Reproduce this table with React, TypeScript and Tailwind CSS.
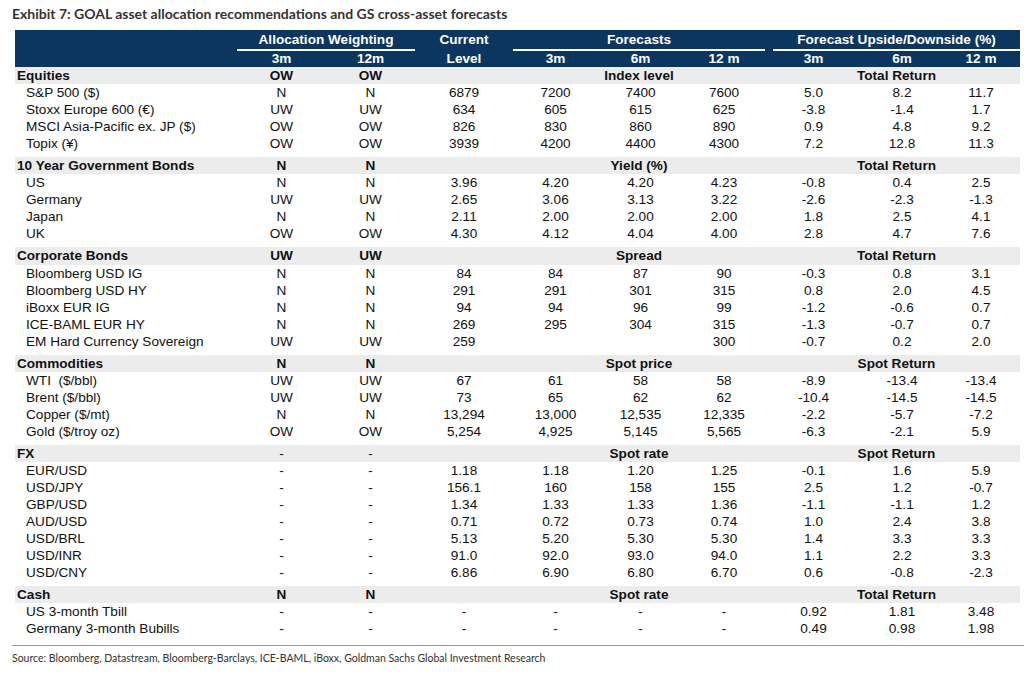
import React from 'react';

const COLS = 'grid grid-cols-[222px_89px_89px_98px_85px_85px_82px_97px_80px_78px]';

type Row = { label: string; v: string[] };
type Section = {
  name: string;
  a3: string;
  a12: string;
  fc: string;
  up: string;
  rows: Row[];
};

const r = (label: string, ...v: string[]): Row => ({ label, v });

const SECTIONS: Section[] = [
  {
    name: 'Equities',
    a3: 'OW',
    a12: 'OW',
    fc: 'Index level',
    up: 'Total Return',
    rows: [
      r('S&P 500 ($)', 'N', 'N', '6879', '7200', '7400', '7600', '5.0', '8.2', '11.7'),
      r('Stoxx Europe 600 (€)', 'UW', 'UW', '634', '605', '615', '625', '-3.8', '-1.4', '1.7'),
      r('MSCI Asia-Pacific ex. JP ($)', 'OW', 'OW', '826', '830', '860', '890', '0.9', '4.8', '9.2'),
      r('Topix (¥)', 'OW', 'OW', '3939', '4200', '4400', '4300', '7.2', '12.8', '11.3'),
    ],
  },
  {
    name: '10 Year Government Bonds',
    a3: 'N',
    a12: 'N',
    fc: 'Yield (%)',
    up: 'Total Return',
    rows: [
      r('US', 'N', 'N', '3.96', '4.20', '4.20', '4.23', '-0.8', '0.4', '2.5'),
      r('Germany', 'UW', 'UW', '2.65', '3.06', '3.13', '3.22', '-2.6', '-2.3', '-1.3'),
      r('Japan', 'N', 'N', '2.11', '2.00', '2.00', '2.00', '1.8', '2.5', '4.1'),
      r('UK', 'OW', 'OW', '4.30', '4.12', '4.04', '4.00', '2.8', '4.7', '7.6'),
    ],
  },
  {
    name: 'Corporate Bonds',
    a3: 'UW',
    a12: 'UW',
    fc: 'Spread',
    up: 'Total Return',
    rows: [
      r('Bloomberg USD IG', 'N', 'N', '84', '84', '87', '90', '-0.3', '0.8', '3.1'),
      r('Bloomberg USD HY', 'N', 'N', '291', '291', '301', '315', '0.8', '2.0', '4.5'),
      r('iBoxx EUR IG', 'N', 'N', '94', '94', '96', '99', '-1.2', '-0.6', '0.7'),
      r('ICE-BAML EUR HY', 'N', 'N', '269', '295', '304', '315', '-1.3', '-0.7', '0.7'),
      r('EM Hard Currency Sovereign', 'UW', 'UW', '259', '', '', '300', '-0.7', '0.2', '2.0'),
    ],
  },
  {
    name: 'Commodities',
    a3: 'N',
    a12: 'N',
    fc: 'Spot price',
    up: 'Spot Return',
    rows: [
      r('WTI  ($/bbl)', 'UW', 'UW', '67', '61', '58', '58', '-8.9', '-13.4', '-13.4'),
      r('Brent ($/bbl)', 'UW', 'UW', '73', '65', '62', '62', '-10.4', '-14.5', '-14.5'),
      r('Copper ($/mt)', 'N', 'N', '13,294', '13,000', '12,535', '12,335', '-2.2', '-5.7', '-7.2'),
      r('Gold ($/troy oz)', 'OW', 'OW', '5,254', '4,925', '5,145', '5,565', '-6.3', '-2.1', '5.9'),
    ],
  },
  {
    name: 'FX',
    a3: '-',
    a12: '-',
    fc: 'Spot rate',
    up: 'Spot Return',
    rows: [
      r('EUR/USD', '-', '-', '1.18', '1.18', '1.20', '1.25', '-0.1', '1.6', '5.9'),
      r('USD/JPY', '-', '-', '156.1', '160', '158', '155', '2.5', '1.2', '-0.7'),
      r('GBP/USD', '-', '-', '1.34', '1.33', '1.33', '1.36', '-1.1', '-1.1', '1.2'),
      r('AUD/USD', '-', '-', '0.71', '0.72', '0.73', '0.74', '1.0', '2.4', '3.8'),
      r('USD/BRL', '-', '-', '5.13', '5.20', '5.30', '5.30', '1.4', '3.3', '3.3'),
      r('USD/INR', '-', '-', '91.0', '92.0', '93.0', '94.0', '1.1', '2.2', '3.3'),
      r('USD/CNY', '-', '-', '6.86', '6.90', '6.80', '6.70', '0.6', '-0.8', '-2.3'),
    ],
  },
  {
    name: 'Cash',
    a3: 'N',
    a12: 'N',
    fc: 'Spot rate',
    up: 'Total Return',
    rows: [
      r('US 3-month Tbill', '-', '-', '-', '-', '-', '-', '0.92', '1.81', '3.48'),
      r('Germany 3-month Bubills', '-', '-', '-', '-', '-', '-', '0.49', '0.98', '1.98'),
    ],
  },
];

function HeaderBand() {
  return (
    <div className={`${COLS} bg-[#0b365f] text-white font-bold`}>
      {/* top line: group titles with white rule below */}
      <div />
      <div className="col-span-2 h-[21px] leading-[19px] text-center border-b-2 border-white">Allocation Weighting</div>
      <div className="h-[21px] leading-[19px] text-center">Current</div>
      <div className="col-span-3 h-[21px] leading-[19px] text-center border-b-2 border-white">Forecasts</div>
      <div className="col-span-3 ml-2 h-[21px] leading-[19px] text-center border-b-2 border-white">Forecast Upside/Downside (%)</div>

      <div className="h-[16px]" />
      {['3m', '12m', 'Level', '3m', '6m', '12 m', '3m', '6m', '12 m'].map((t, i) => (
        <div key={i} className="h-[16px] leading-[16px] text-center">{t}</div>
      ))}
    </div>
  );
}

function SectionBlock({ s, first }: { s: Section; first: boolean }) {
  return (
    <div>
      <div className={`${COLS} ${first ? '' : 'mt-[5px]'} h-[17.05px] leading-[17px] bg-[#ececec] font-bold`}>
        <div className="pl-[2px]">{s.name}</div>
        <div className={`text-center ${s.a3 === '-' ? 'font-normal' : ''}`}>{s.a3}</div>
        <div className={`text-center ${s.a12 === '-' ? 'font-normal' : ''}`}>{s.a12}</div>
        <div />
        <div className="col-span-3 text-center">{s.fc}</div>
        <div className="col-span-3 pl-2 text-center">{s.up}</div>
      </div>
      {s.rows.map((row) => (
        <div key={row.label} className={`${COLS} h-[17.05px] leading-[17px]`}>
          <div className="pl-[11px] whitespace-pre">{row.label}</div>
          {row.v.map((v, i) => (
            <div key={i} className="text-center">{v}</div>
          ))}
        </div>
      ))}
    </div>
  );
}

export default function App() {
  return (
    <div className="w-[1024px] h-[678px] bg-white overflow-hidden">
      <div className="pl-[12px] pt-[6px] h-[22px] leading-[16px] text-[14px] font-bold text-[#333333] font-['Lato',sans-serif]">
        Exhibit 7: GOAL asset allocation recommendations and GS cross-asset forecasts
      </div>

      <div className="ml-[15px] mt-[8px] w-[1005px] text-[13.6px] text-[#111111] font-['Liberation_Sans',Arial,sans-serif]">
        <HeaderBand />
        {SECTIONS.map((s, i) => (
          <SectionBlock key={s.name} s={s} first={i === 0} />
        ))}
      </div>

      <div className="ml-[12px] mt-[7px] h-px bg-[#9a9a9a]" />
      <div className="pl-[12px] mt-[6px] text-[10.5px] leading-[13px] text-[#333333] font-['Lato',sans-serif]">
        Source: Bloomberg, Datastream, Bloomberg-Barclays, ICE-BAML, iBoxx, Goldman Sachs Global Investment Research
      </div>
    </div>
  );
}
